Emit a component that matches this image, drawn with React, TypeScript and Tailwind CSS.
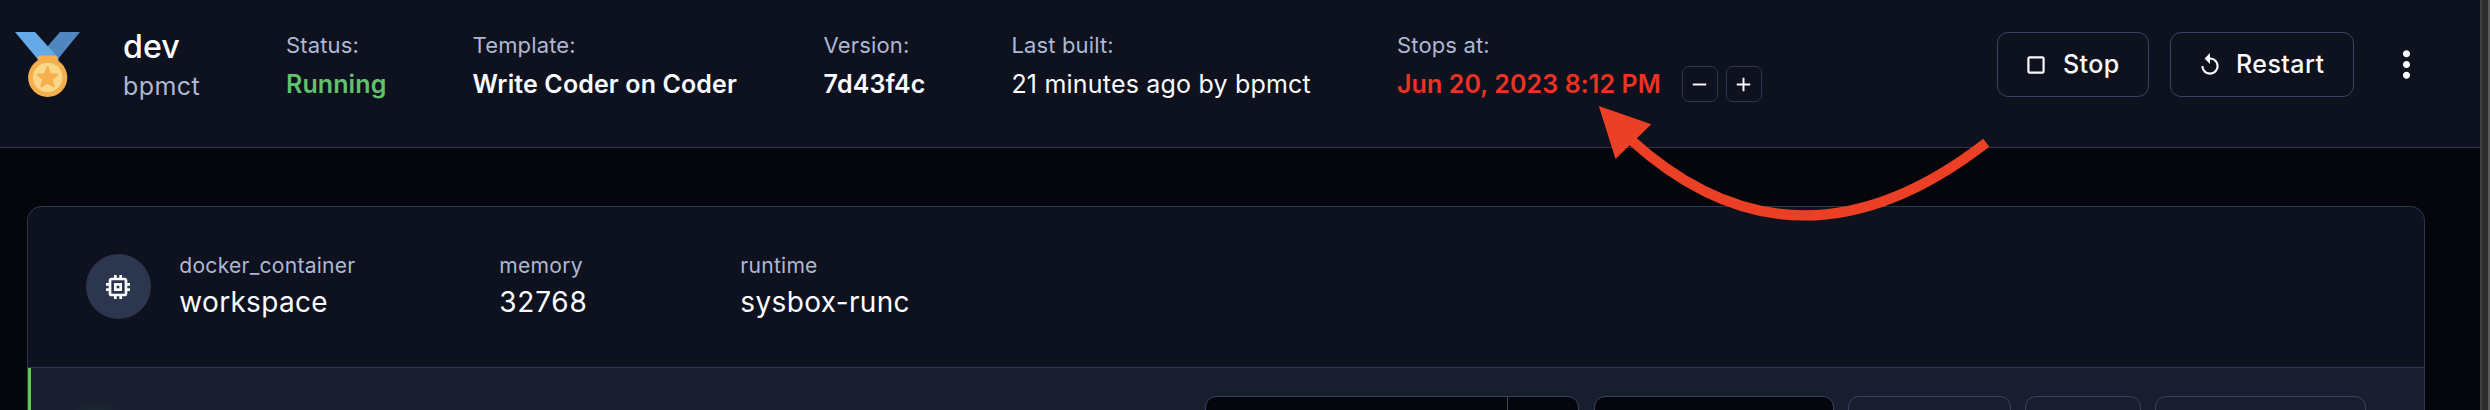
import type { ReactNode } from "react";

const MedalIcon = () => (
  <svg viewBox="0 0 65 65" className="h-[65px] w-[65px] shrink-0">
    <path d="M45 0H65L43 27L32 15Z" fill="#5187c0" />
    <path d="M0 0H20L43.5 26V30H25Z" fill="#66a9e9" />
    <rect x="22.8" y="23.5" width="19.8" height="9" rx="3" fill="#f5af4c" />
    <circle cx="32.7" cy="45.4" r="19.6" fill="#f5af4c" />
    <circle cx="32.7" cy="45.4" r="14.7" fill="#fbd78a" />
    <path
      d="M32.5 35L35.2 42.2L42.6 42.5L36.7 47.2L38.8 54.6L32.5 50.4L26.2 54.6L28.3 47.2L22.4 42.5L29.8 42.2Z"
      fill="#f5af4c"
      stroke="#f5af4c"
      strokeWidth="1.8"
      strokeLinejoin="round"
    />
  </svg>
);

const Glyph = ({ d, className }: { d: string; className: string }) => (
  <svg viewBox="0 0 24 24" fill="currentColor" className={className}>
    <path d={d} />
  </svg>
);

const STOP =
  "M18 4H6c-1.1 0-2 .9-2 2v12c0 1.1.9 2 2 2h12c1.1 0 2-.9 2-2V6c0-1.1-.9-2-2-2zm0 14H6V6h12v12z";
const REPLAY =
  "M12 5V1L7 6l5 5V7c3.31 0 6 2.69 6 6s-2.69 6-6 6-6-2.69-6-6H4c0 4.42 3.58 8 8 8s8-3.58 8-8-3.58-8-8-8z";
const MORE =
  "M12 8c1.1 0 2-.9 2-2s-.9-2-2-2-2 .9-2 2 .9 2 2 2zm0 2c-1.1 0-2 .9-2 2s.9 2 2 2 2-.9 2-2-.9-2-2-2zm0 6c-1.1 0-2 .9-2 2s.9 2 2 2 2-.9 2-2-.9-2-2-2z";
const MEMORY =
  "M15 9H9v6h6V9zm-2 4h-2v-2h2v2zm8-2V9h-2V7c0-1.1-.9-2-2-2h-2V3h-2v2h-2V3H9v2H7c-1.1 0-2 .9-2 2v2H3v2h2v2H3v2h2v2c0 1.1.9 2 2 2h2v2h2v-2h2v2h2v-2h2c1.1 0 2-.9 2-2v-2h2v-2h-2v-2h2zm-4 6H7V7h10v10z";

const Stat = ({ label, className, children }: { label: string; className: string; children: ReactNode }) => (
  <div className={`shrink-0 whitespace-nowrap pt-[29px] ${className}`}>
    <div className="text-[22px] leading-[32px] tracking-[0.15px] text-[#adb8d4]">{label}</div>
    <div className="flex h-[46px] items-center text-[25px] leading-[46px]">{children}</div>
  </div>
);

const Meta = ({ label, value, className, valueClass }: { label: string; value: string; className: string; valueClass: string }) => (
  <div className={`shrink-0 whitespace-nowrap pt-[44px] ${className}`}>
    <div className="text-[21.1px] leading-[30px] tracking-[0.24px] text-[#adb8d4]">{label}</div>
    <div className={`text-[28px] leading-[43px] ${valueClass}`}>{value}</div>
  </div>
);

const Step = ({ d, label }: { d: string; label: string }) => (
  <button aria-label={label} className="flex h-9 w-9 items-center justify-center rounded-[7px] border border-[#2d3650]">
    <Glyph d={d} className="h-[23px] w-[23px]" />
  </button>
);

export default function App() {
  return (
    <div className="relative flex h-[410px] w-[2490px] overflow-hidden bg-[#04060b] font-['Inter',sans-serif] text-[#fbfcff]">
      <div className="flex w-[2480px] shrink-0 flex-col">
        <header className="flex h-[148px] shrink-0 border-b border-[#2d3650] bg-[#0e111e] pl-[15px]">
          <div className="w-[108px] shrink-0 pt-8">
            <MedalIcon />
          </div>
          <div className="w-[163px] shrink-0 pt-[27px]">
            <h1 className="text-[32.2px] font-medium leading-[39px]">dev</h1>
            <div className="text-[25px] leading-10 tracking-[0.4px] text-[#adb8d4]">bpmct</div>
          </div>
          <Stat label="Status:" className="w-[186.6px]">
            <span className="font-semibold tracking-[0.1px] text-[#61c16d]">Running</span>
          </Stat>
          <Stat label="Template:" className="w-[351px]">
            <span className="font-semibold tracking-[0.12px]">Write Coder on Coder</span>
          </Stat>
          <Stat label="Version:" className="w-[187.8px]">
            <span className="font-semibold tracking-[0.18px]">7d43f4c</span>
          </Stat>
          <Stat label="Last built:" className="w-[385.6px]">
            <span className="tracking-[0.2px]">21 minutes ago by bpmct</span>
          </Stat>
          <Stat label="Stops at:" className="w-[600px]">
            <span className="w-[285px] font-semibold tracking-[0.1px] text-[#ec3223]">Jun 20, 2023 8:12 PM</span>
            <div className="flex gap-2">
              <Step d="M19 13H5v-2h14v2z" label="Subtract time" />
              <Step d="M19 13h-6v6h-2v-6H5v-2h6V5h2v6h6v2z" label="Add time" />
            </div>
          </Stat>
          <div className="flex h-[65px] items-center pt-16 text-[25px] font-medium tracking-[0.43px]">
            <button className="flex h-[65px] w-[152px] shrink-0 items-center rounded-[11px] border border-[#384363] pl-[25px]">
              <Glyph d={STOP} className="h-[26px] w-[26px] shrink-0" />
              <span className="ml-[14px]">Stop</span>
            </button>
            <button className="ml-[21px] flex h-[65px] w-[184px] shrink-0 items-center rounded-[11px] border border-[#384363] pl-[26px]">
              <Glyph d={REPLAY} className="h-[26px] w-[26px] shrink-0" />
              <span className="ml-[13px]">Restart</span>
            </button>
            <button aria-label="More options" className="ml-[31px] shrink-0">
              <Glyph d={MORE} className="h-[43px] w-[43px]" />
            </button>
          </div>
        </header>

        <section className="ml-[27px] mt-[58px] flex h-[204px] w-[2398px] shrink-0 flex-col overflow-hidden rounded-t-[15px] border border-b-0 border-[#2d3650] bg-[#0e111e]">
          <div className="flex h-[161px] shrink-0 border-b border-[#2d3650] pl-[58px]">
            <div className="mt-[47px] flex h-[65px] w-[65px] shrink-0 items-center justify-center rounded-full bg-[#2d364f]">
              <Glyph d={MEMORY} className="mr-px h-[32px] w-[32px]" />
            </div>
            <Meta label="docker_container" value="workspace" className="ml-[28.3px] w-[320px]" valueClass="tracking-[0.32px]" />
            <Meta label="memory" value="32768" className="w-[241px]" valueClass="tracking-[0.75px]" />
            <Meta label="runtime" value="sysbox-runc" className="w-[300px]" valueClass="tracking-[0.35px]" />
          </div>
          <div className="flex flex-1 justify-end border-l-[3px] border-[#61c16d] bg-[#191e2f] bg-[radial-gradient(circle_at_66px_74px,#24403a_0,#191e2f_42px)] pr-[58px] pt-7">
            <div className="flex h-14 w-[374px] rounded-[11px] border border-[#384363] bg-[#04060b]">
              <div className="w-[302px] border-r border-[#384363]" />
            </div>
            <div className="ml-[15px] h-14 w-[240px] rounded-[11px] border border-[#384363] bg-[#04060b]" />
            <div className="ml-[14px] h-14 w-[163px] rounded-[11px] border border-[#384363]" />
            <div className="ml-[14px] h-14 w-[116px] rounded-[11px] border border-[#384363]" />
            <div className="ml-[14px] h-14 w-[211px] rounded-[11px] border border-[#384363]" />
          </div>
        </section>
      </div>
      <div className="w-[2px] bg-[#414141]" />
      <div className="w-[6px] bg-[#2c2c2c]" />
      <div className="w-[2px] bg-[#5a5a5a]" />

      <svg viewBox="0 0 400 130" className="pointer-events-none absolute left-[1595px] top-[100px] h-[130px] w-[400px]">
        <path d="M35 39Q201 190 391.3 42.7" fill="none" stroke="#ec4026" strokeWidth="10" />
        <path d="M3.8 6L56.3 24.3L20.5 59Z" fill="#ec4026" />
      </svg>
    </div>
  );
}
